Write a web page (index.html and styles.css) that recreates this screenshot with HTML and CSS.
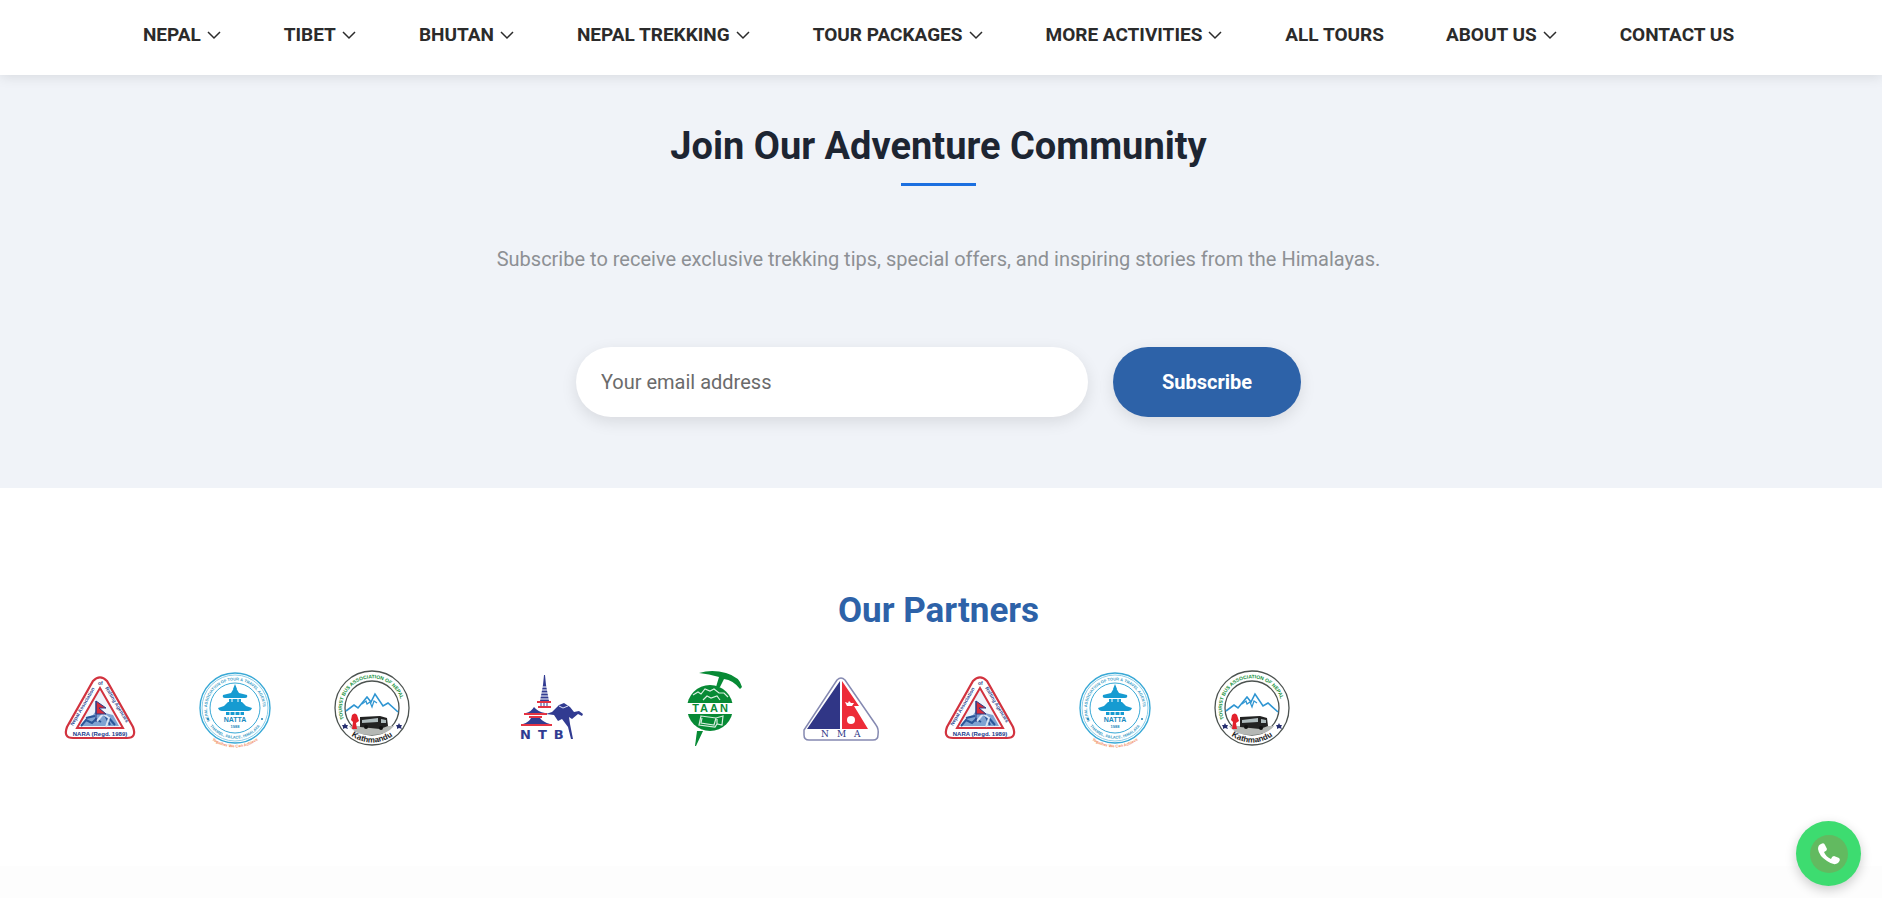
FILE: index.html
```html
<!DOCTYPE html>
<html lang="en">
<head>
    <meta charset="UTF-8">
    <meta name="viewport" content="width=device-width, initial-scale=1.0">
    <title>Our Partners</title>
    <link rel="stylesheet" href="styles.css">
</head>
<body>
    <!-- Shared paths for the round and slanted logo lettering -->
    <svg class="defs" width="0" height="0" aria-hidden="true">
        <defs>
            <path id="nara-left" d="M19 57L43 16"/>
            <path id="nara-right" d="M51 19L74 57"/>
            <path id="natta-top" d="M24 52A28 28 0 1 1 74 52"/>
            <path id="natta-bottom" d="M21 52A31 31 0 0 0 77 52"/>
            <path id="natta-tag" d="M20 66A40 40 0 0 0 78 66"/>
            <path id="bus-top" d="M20 50A30 30 0 1 1 76 50"/>
            <path id="bus-bottom" d="M24 64A35 35 0 0 0 72 64"/>
        </defs>
    </svg>

    <header class="header">
        <nav class="nav">
            <a href="#">NEPAL <svg class="arrow" viewBox="0 0 16 16"><path d="M2 5l6 6 6-6"/></svg></a>
            <a href="#">TIBET <svg class="arrow" viewBox="0 0 16 16"><path d="M2 5l6 6 6-6"/></svg></a>
            <a href="#">BHUTAN <svg class="arrow" viewBox="0 0 16 16"><path d="M2 5l6 6 6-6"/></svg></a>
            <a href="#">NEPAL TREKKING <svg class="arrow" viewBox="0 0 16 16"><path d="M2 5l6 6 6-6"/></svg></a>
            <a href="#">TOUR PACKAGES <svg class="arrow" viewBox="0 0 16 16"><path d="M2 5l6 6 6-6"/></svg></a>
            <a href="#">MORE ACTIVITIES <svg class="arrow" viewBox="0 0 16 16"><path d="M2 5l6 6 6-6"/></svg></a>
            <a href="#">ALL TOURS</a>
            <a href="#">ABOUT US <svg class="arrow" viewBox="0 0 16 16"><path d="M2 5l6 6 6-6"/></svg></a>
            <a href="#">CONTACT US</a>
        </nav>
    </header>

    <!-- Newsletter -->
    <section class="newsletter">
        <h2>Join Our Adventure Community</h2>
        <p>Subscribe to receive exclusive trekking tips, special offers, and inspiring stories from the Himalayas.</p>
        <form class="newsletter-form">
            <input type="email" id="email" aria-label="Your email address" placeholder="Your email address">
            <button type="submit">Subscribe</button>
        </form>
    </section>

    <!-- Partners -->
    <section class="partners">
        <h2>Our Partners</h2>
        <div class="partner-logos">
            <svg class="logo" viewBox="0 0 92 80" width="92" height="80">
                <path d="M39 12Q46 5 53 12L79 58Q83 69 73 69H19Q9 69 13 58Z" fill="#fff" stroke="#d2333f" stroke-width="2.2"/>
                <path d="M46 19L69 59H23Z" fill="#eef3fa" stroke="#d2333f" stroke-width="2"/>
                <path d="M27 57L33 48 39 46 44 39 51 44 59 46 65 57Z" fill="#7fa3d2"/>
                <path d="M27 57L32 51 38 54 42 50 47 53M32 49L41 47M54 48L61 56M51 46L56 56" fill="none" stroke="#2a5699" stroke-width="2"/>
                <path d="M43 52L49 45 55 49 52 58" fill="none" stroke="#d9e5f4" stroke-width="2"/>
                <path d="M42 32L52 39H45L52 45H42Z" fill="#d52c3b" stroke="#2a3c85"/>
                <path d="M42 32V53" stroke="#2a3c85"/>
                <text class="nara-side"><textPath href="#nara-left">Nepal Association</textPath></text>
                <text x="44" y="16" class="nara-side">of</text>
                <text class="nara-side"><textPath href="#nara-right">Rafting Agencies</textPath></text>
                <text x="46" y="67" class="nara-name">NARA (Regd. 1989)</text>
            </svg>

            <svg class="logo" viewBox="0 0 98 80" width="98" height="80">
                <circle cx="49" cy="39" r="35" fill="#fff" stroke="#39a9d6" stroke-width="1.4"/>
                <circle cx="49" cy="39" r="33" fill="none" stroke="#8fcee8" stroke-width="1"/>
                <circle cx="49" cy="39" r="25" fill="none" stroke="#39a9d6" stroke-width="1"/>
                <path d="M49 15L51 20H47ZM48 19H50L53 24 61 26Q62 29 59 29H39Q36 29 37 26L45 24ZM43 30H55V33H43ZM42 33H56L60 37 66 39Q65 42 62 42H36Q33 42 32 39L38 37Z" fill="#169bd1"/>
                <path d="M40 43H58V46H40Z" fill="#169bd1"/>
                <path d="M46 30V33M52 30V33M44 43V46M49 43V46M54 43V46" stroke="#fff"/>
                <text class="natta-ring"><textPath href="#natta-top">NEPAL ASSOCIATION OF TOUR &amp; TRAVEL AGENTS</textPath></text>
                <text class="natta-ring natta-low"><textPath href="#natta-bottom" startOffset="50%">THAMEL, PALACE, HIMALAYA</textPath></text>
                <text x="49" y="53" class="natta-name">NATTA</text>
                <text x="49" y="59" class="natta-year">1988</text>
                <circle cx="22" cy="50" r="1" fill="#1f82b5"/>
                <circle cx="76" cy="50" r="1" fill="#1f82b5"/>
                <text class="natta-tag"><textPath href="#natta-tag" startOffset="50%">Together We Can Achieve</textPath></text>
            </svg>

            <svg class="logo" viewBox="0 0 96 80" width="96" height="80">
                <circle cx="48" cy="39" r="37" fill="#fff" stroke="#4c5350" stroke-width="1.3"/>
                <circle cx="48" cy="39" r="27" fill="#fff" stroke="#4c5350" stroke-width="1.3"/>
                <path d="M22 42L30 36 34 39 43 28 47 33 51 25 59 37 64 34 74 43" fill="none" stroke="#2e95d2" stroke-width="1.6"/>
                <path d="M38 35L42 32 43 35 46 33 48 38 50 32 53 34" fill="none" stroke="#2e95d2" stroke-width="1.2"/>
                <path d="M25 57H70Q63 66 48 66 33 66 28 60Z" fill="#b5b8b5"/>
                <path d="M36 48L56 47 63 49 64 57 56 60 36 58Z" fill="#222"/>
                <path d="M38 51L54 49V53L38 54ZM57 50L62 51V54H57Z" fill="#aebbbd"/>
                <path d="M28 46Q31 43 33 46L35 52 32 54 33 60H28L29 53 27 51Z" fill="#e3202b"/>
                <circle cx="42" cy="58" r="2" fill="#111"/>
                <circle cx="57" cy="59" r="2" fill="#111"/>
                <text class="bus-ring"><textPath href="#bus-top">TOURIST BUS ASSOCIATION OF NEPAL</textPath></text>
                <text class="bus-city"><textPath href="#bus-bottom" startOffset="50%">Kathmandu</textPath></text>
                <path d="M21 54l1 2h2l-1 2 1 2-3-1-2 1v-2l-1-2h2zM75 54l1 2h2l-1 2 1 2-3-1-2 1v-2l-1-2h2z" fill="#272f70"/>
            </svg>

            <svg class="logo" viewBox="0 0 184 80" width="184" height="80">
                <path d="M84 6H85L86 16 89 32H80L83 16Z" fill="#313b91"/>
                <path d="M81 18H88M80 21H89M80 24H89M79 27H90M79 30H90" stroke="#fff"/>
                <path d="M77 33H91M78 38H91" stroke="#e43343" stroke-width="2"/>
                <path d="M81 34V37M84 34V37M87 34V37" stroke="#313b91"/>
                <path d="M66 44Q71 43 74 38 78 43 85 44Z" fill="#313b91"/>
                <path d="M64 45H87" stroke="#e43343" stroke-width="2"/>
                <path d="M69 48H82" stroke="#e43343" stroke-width="2"/>
                <path d="M63 55Q69 53 71 49H80Q83 53 90 55Z" fill="#313b91"/>
                <path d="M61 56H92" stroke="#e43343" stroke-width="2"/>
                <path d="M86 45L92 43 99 36 104 34 110 38 114 43 119 42 123 45 122 47 118 45 112 50 109 48 110 55 113 70H111L108 58 102 50 98 52 94 46Z" fill="#313b91"/>
                <path d="M99 37L103 39 108 37" fill="none" stroke="#dce1f4"/>
                <text x="60" y="70" class="ntb-name">NTB</text>
            </svg>

            <svg class="logo" viewBox="0 0 60 80" width="60" height="80">
                <path d="M15 4Q28 0 42 4 56 8 58 18L56 20Q49 11 40 10L36 18H32L35 8Q25 5 15 4Z" fill="#078a35"/>
                <circle cx="26" cy="39" r="23" fill="#078a35"/>
                <path d="M13 62H19L12 77H11Z" fill="#078a35"/>
                <path d="M9 26L14 23 17 25 21 20 26 22 30 20 35 24 40 24 44 28M19 31L23 27 27 29 33 27 36 31M17 47L32 49 39 47 38 56 33 55 31 58 15 56ZM18 49L17 54 30 56 32 49M33 50V55" fill="none" stroke="#d9eee0" stroke-width="1.2"/>
                <path d="M1 34H51V45H1Z" fill="#fff"/>
                <text x="27" y="43" class="taan-name">TAAN</text>
            </svg>

            <svg class="logo" viewBox="0 0 110 80" width="110" height="80">
                <path d="M53 11Q57 7 61 11L92 56Q95 60 94 66 94 71 89 71H25Q20 71 20 66V61Z" fill="#fff" stroke="#8589b1" stroke-width="1.5"/>
                <path d="M56 12V60H23Z" fill="#303686"/>
                <path d="M58 12L75 37H70L84 60H58Z" fill="#ed2c38"/>
                <path d="M61 33L64 34 65 32 67 34 70 34 68 37H63Z" fill="#fff"/>
                <circle cx="67" cy="51" r="4" fill="#fff"/>
                <text x="37" y="68" class="nma-name">NMA</text>
            </svg>

            <svg class="logo" viewBox="0 0 92 80" width="92" height="80">
                <path d="M39 12Q46 5 53 12L79 58Q83 69 73 69H19Q9 69 13 58Z" fill="#fff" stroke="#d2333f" stroke-width="2.2"/>
                <path d="M46 19L69 59H23Z" fill="#eef3fa" stroke="#d2333f" stroke-width="2"/>
                <path d="M27 57L33 48 39 46 44 39 51 44 59 46 65 57Z" fill="#7fa3d2"/>
                <path d="M27 57L32 51 38 54 42 50 47 53M32 49L41 47M54 48L61 56M51 46L56 56" fill="none" stroke="#2a5699" stroke-width="2"/>
                <path d="M43 52L49 45 55 49 52 58" fill="none" stroke="#d9e5f4" stroke-width="2"/>
                <path d="M42 32L52 39H45L52 45H42Z" fill="#d52c3b" stroke="#2a3c85"/>
                <path d="M42 32V53" stroke="#2a3c85"/>
                <text class="nara-side"><textPath href="#nara-left">Nepal Association</textPath></text>
                <text x="44" y="16" class="nara-side">of</text>
                <text class="nara-side"><textPath href="#nara-right">Rafting Agencies</textPath></text>
                <text x="46" y="67" class="nara-name">NARA (Regd. 1989)</text>
            </svg>

            <svg class="logo" viewBox="0 0 98 80" width="98" height="80">
                <circle cx="49" cy="39" r="35" fill="#fff" stroke="#39a9d6" stroke-width="1.4"/>
                <circle cx="49" cy="39" r="33" fill="none" stroke="#8fcee8" stroke-width="1"/>
                <circle cx="49" cy="39" r="25" fill="none" stroke="#39a9d6" stroke-width="1"/>
                <path d="M49 15L51 20H47ZM48 19H50L53 24 61 26Q62 29 59 29H39Q36 29 37 26L45 24ZM43 30H55V33H43ZM42 33H56L60 37 66 39Q65 42 62 42H36Q33 42 32 39L38 37Z" fill="#169bd1"/>
                <path d="M40 43H58V46H40Z" fill="#169bd1"/>
                <path d="M46 30V33M52 30V33M44 43V46M49 43V46M54 43V46" stroke="#fff"/>
                <text class="natta-ring"><textPath href="#natta-top">NEPAL ASSOCIATION OF TOUR &amp; TRAVEL AGENTS</textPath></text>
                <text class="natta-ring natta-low"><textPath href="#natta-bottom" startOffset="50%">THAMEL, PALACE, HIMALAYA</textPath></text>
                <text x="49" y="53" class="natta-name">NATTA</text>
                <text x="49" y="59" class="natta-year">1988</text>
                <circle cx="22" cy="50" r="1" fill="#1f82b5"/>
                <circle cx="76" cy="50" r="1" fill="#1f82b5"/>
                <text class="natta-tag"><textPath href="#natta-tag" startOffset="50%">Together We Can Achieve</textPath></text>
            </svg>

            <svg class="logo" viewBox="0 0 96 80" width="96" height="80">
                <circle cx="48" cy="39" r="37" fill="#fff" stroke="#4c5350" stroke-width="1.3"/>
                <circle cx="48" cy="39" r="27" fill="#fff" stroke="#4c5350" stroke-width="1.3"/>
                <path d="M22 42L30 36 34 39 43 28 47 33 51 25 59 37 64 34 74 43" fill="none" stroke="#2e95d2" stroke-width="1.6"/>
                <path d="M38 35L42 32 43 35 46 33 48 38 50 32 53 34" fill="none" stroke="#2e95d2" stroke-width="1.2"/>
                <path d="M25 57H70Q63 66 48 66 33 66 28 60Z" fill="#b5b8b5"/>
                <path d="M36 48L56 47 63 49 64 57 56 60 36 58Z" fill="#222"/>
                <path d="M38 51L54 49V53L38 54ZM57 50L62 51V54H57Z" fill="#aebbbd"/>
                <path d="M28 46Q31 43 33 46L35 52 32 54 33 60H28L29 53 27 51Z" fill="#e3202b"/>
                <circle cx="42" cy="58" r="2" fill="#111"/>
                <circle cx="57" cy="59" r="2" fill="#111"/>
                <text class="bus-ring"><textPath href="#bus-top">TOURIST BUS ASSOCIATION OF NEPAL</textPath></text>
                <text class="bus-city"><textPath href="#bus-bottom" startOffset="50%">Kathmandu</textPath></text>
                <path d="M21 54l1 2h2l-1 2 1 2-3-1-2 1v-2l-1-2h2zM75 54l1 2h2l-1 2 1 2-3-1-2 1v-2l-1-2h2z" fill="#272f70"/>
            </svg>
        </div>
    </section>

    <footer class="footer"></footer>

    <!-- Floating call button -->
    <a href="#" class="call-btn" aria-label="Call us">
        <span class="call-icon">
            <svg viewBox="0 0 24 24" width="24" height="24"><path d="M4 2Q7 0 8 3L10 7Q10 9 7 10 9 15 14 17 15 14 17 14L22 16Q24 18 21 21 17 24 10 19 2 14 1 7 1 3 4 2Z" fill="#fff"/></svg>
        </span>
    </a>
</body>
</html>
```

FILE: styles.css
```css
* {
    box-sizing: border-box;
}
body {
    font-family: Roboto, Arial, sans-serif;
    background-color: #fff;
    margin: 0;
    min-height: 100vh;
    display: flex;
    flex-direction: column;
    overflow-x: hidden;
}
.defs {
    position: absolute;
}
.header {
    position: relative;
    z-index: 1;
    padding: 21px 5px 26px 0;
    background-color: #fff;
    box-shadow: 0 2px 12px rgba(0, 0, 0, 0.1);
}
.nav {
    display: flex;
    flex-wrap: wrap;
    justify-content: center;
    gap: 0 62px;
}
.nav a {
    display: flex;
    align-items: center;
    gap: 5px;
    color: #2b2b2b;
    font-size: 19px;
    line-height: 28px;
    font-weight: 700;
    text-decoration: none;
}
.arrow {
    width: 16px;
    height: 16px;
    fill: none;
    stroke: #2b2b2b;
    stroke-width: 1.5;
}
.newsletter {
    display: flex;
    flex-direction: column;
    align-items: center;
    padding: 45px 5px 71px 0;
    background-color: #f0f3f8;
}
.newsletter h2 {
    display: flex;
    flex-direction: column;
    align-items: center;
    gap: 11px;
    margin: 0 0 59px;
    color: #1d2532;
    font-size: 38px;
    line-height: 52px;
    font-weight: 700;
}
.newsletter h2::after {
    content: "";
    width: 75px;
    height: 3px;
    background-color: #1b6fe0;
}
.newsletter p {
    margin: 0 0 74px;
    color: #8d9094;
    font-size: 20px;
    line-height: 28px;
}
.newsletter-form {
    display: flex;
    gap: 25px;
}
.newsletter-form input,
.newsletter-form button {
    height: 70px;
    border: none;
    border-radius: 35px;
    font-family: inherit;
    font-size: 20px;
    box-shadow: 0 5px 16px rgba(0, 0, 0, 0.1);
}
.newsletter-form input {
    width: 512px;
    padding: 0 25px;
    background-color: #fff;
}
.newsletter-form input::placeholder {
    color: #6b6b6b;
}
.newsletter-form button {
    padding: 0 49px;
    background-color: #2d62a8;
    color: #fff;
    font-weight: 700;
    cursor: pointer;
}
.partners {
    padding: 99px 5px 117px 0;
}
.partners h2 {
    margin: 0 0 34px;
    color: #2d62a8;
    font-size: 35px;
    line-height: 48px;
    font-weight: 700;
    text-align: center;
}
.partner-logos {
    display: flex;
    gap: 40px;
    padding-left: 54px;
}
.logo {
    flex-shrink: 0;
    font-family: Arial, sans-serif;
    font-weight: bold;
}
.nara-side {
    font-size: 5px;
    fill: #2c4b91;
}
.nara-name {
    font-size: 6px;
    fill: #20398a;
    text-anchor: middle;
}
.natta-ring {
    font-size: 4px;
    fill: #3a9cc6;
}
.natta-low {
    text-anchor: middle;
}
.natta-name {
    font-size: 7px;
    fill: #1789bd;
    text-anchor: middle;
}
.natta-year {
    font-size: 4px;
    fill: #1789bd;
    text-anchor: middle;
}
.natta-tag {
    font-size: 4px;
    fill: #f08a5d;
    text-anchor: middle;
}
.bus-ring {
    font-size: 5px;
    fill: #0f8f3a;
}
.bus-city {
    font-size: 8px;
    fill: #222;
    text-anchor: middle;
}
.ntb-name {
    font-family: "DejaVu Sans", sans-serif;
    font-size: 13px;
    fill: #313b91;
    letter-spacing: 7px;
}
.taan-name {
    font-size: 11px;
    fill: #078a35;
    letter-spacing: 2px;
    text-anchor: middle;
}
.nma-name {
    font-family: "DejaVu Serif", serif;
    font-size: 9px;
    font-weight: normal;
    fill: #303686;
    letter-spacing: 8px;
}
.footer {
    flex: 1;
    background-color: #fdfdfd;
}
.call-btn {
    position: fixed;
    right: 21px;
    bottom: 12px;
    width: 65px;
    height: 65px;
    display: flex;
    align-items: center;
    justify-content: center;
    border-radius: 50%;
    background-color: #3ddc70;
    box-shadow: 0 4px 12px rgba(0, 0, 0, 0.2);
}
.call-icon {
    display: flex;
    align-items: center;
    justify-content: center;
    width: 38px;
    height: 38px;
    border-radius: 50%;
    background-color: #62ba60;
}
```
